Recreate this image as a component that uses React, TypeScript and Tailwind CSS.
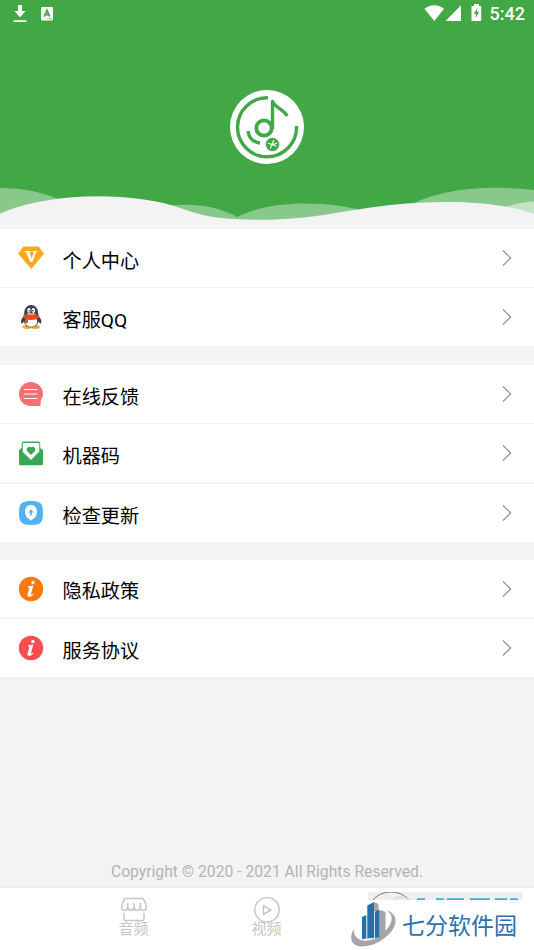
import type { ReactNode } from "react";

function StatusBar() {
  return (
    <div className="flex h-7 items-center justify-between pl-3 pr-[9px] text-white">
      <div className="flex items-center">
        <svg width="16" height="20" viewBox="0 0 16 20" fill="currentColor">
          <path d="M6 1h4v6h3.700L8 13.200 2.300 7H6zM1.500 16.200h13v1.900h-13z" />
        </svg>
        <svg className="ml-[13px]" width="12" height="14" viewBox="0 0 12 14">
          <rect width="12" height="13.500" rx="1" fill="#fff" />
          <path d="M3.300 9.700 6 3.200l2.700 6.500M4.300 7.700h3.400" fill="none" stroke="#42a846" strokeWidth="1.700" />
          <path d="M6.500 11.700h1M8.500 11.700h2" stroke="#42a846" />
        </svg>
      </div>
      <div className="flex items-center">
        <svg className="-mt-0.5" width="38" height="18" viewBox="0 0 38 18" fill="currentColor">
          <path d="M.5 4.800C6-.1 14.500-.1 20 4.800L10.300 17zM37 1.200V17H21.500z" />
        </svg>
        <svg className="-mt-[3px] ml-[9px]" width="11" height="17" viewBox="0 0 11 17">
          <path d="M3 0h5v2h2.200v15H.5V2H3z" fill="#fff" />
          <path d="M6.300 4 2.800 9.700h2.300L4.500 14l3.700-6H5.800z" fill="#42a846" />
        </svg>
        <span className="ml-2 text-[18px] leading-7 font-medium">5:42</span>
      </div>
    </div>
  );
}

function AppLogo() {
  return (
    <svg width="74" height="74" viewBox="0 0 74 74" fill="none" stroke="#42a846">
      <circle cx="37" cy="37" r="37" fill="#fff" stroke="none" />
      <path d="M38 7.800A29.500 29.500 0 1 0 66.500 36" strokeWidth="3.400" />
      <path d="M18 41c1 7 5 11.200 12 12" strokeWidth="3.400" />
      <circle cx="34" cy="38" r="7.700" strokeWidth="3.800" />
      <path d="M42.500 39V11.500C45.500 18 53 19 57.300 26" strokeWidth="3.400" strokeLinejoin="round" />
      <circle cx="42.500" cy="54.500" r="7" fill="#42a846" stroke="#fff" strokeWidth=".6" />
      <path d="M38 53.200 46.500 56M43.800 50.300 40.200 58.500M43 54.500l4-1.500" stroke="#fff" strokeWidth="1.200" />
    </svg>
  );
}

function Waves() {
  return (
    <svg className="block" width="534" height="49" viewBox="0 180 534 49">
      <path
        d="M0 188C24 188 42 192 60 200V229H0zM160 207C190 202 217 206 237 217C272 199 331 201 368 212V229H160zM405 208C435 190 481 184 534 190V229H405z"
        fill="#89c88b"
      />
      <path d="M503 208Q519 202 534 201.500V220z" fill="#c4e3c5" />
      <path
        d="M0 213.500C50 192 128 192 174 206C190 211 205 218 235 219C304 223 342 210 390 205C438 200 496 200 534 214V229H0z"
        fill="#f3f3f3"
      />
    </svg>
  );
}

function DiamondIcon() {
  return (
    <svg className="-mt-0.5" width="26" height="26" viewBox="0 0 26 26">
      <path d="M5.500 2.500h15L26 9.500 13.300 25 .2 9.500z" fill="#fba81b" />
      <path d="M6.800 7h6v1.300h-1.300l2.300 6.200 2-6.200h-1.200V7h4.700v1.300h-1.100L14.300 18h-2L8 8.300H6.800z" fill="#fff" />
    </svg>
  );
}

function PenguinIcon() {
  return (
    <svg width="26" height="26" viewBox="0 0 26 26">
      <ellipse cx="9" cy="23" rx="4.500" ry="1.900" fill="#f4a52c" />
      <ellipse cx="17.300" cy="23" rx="4.500" ry="1.900" fill="#f4a52c" />
      <path d="M6.500 11.500C3.500 14 2.500 16.500 3.300 19.500c1 .3 2-1 2.700-2 1 4 3.500 5.800 7.200 5.800s6.200-1.800 7.200-5.800c.7 1 1.700 2.300 2.700 2 .8-3-.2-5.500-3.200-8z" fill="#35434e" />
      <path d="M6.300 12C5.500 5 8.500 1 13.200 1s7.600 4 6.800 11z" fill="#35434e" />
      <ellipse cx="13.200" cy="17.500" rx="6" ry="5.300" fill="#fff" />
      <path d="M5.500 10.500q7.700 3 15.400 0l.6 3.500q-5 2.500-11.500 1.700v3.300H7.200v-4.500L5 13.700z" fill="#e8472b" />
      <ellipse cx="11" cy="6.500" rx="1.700" ry="2.400" fill="#fff" />
      <ellipse cx="15.400" cy="6.500" rx="1.700" ry="2.400" fill="#fff" />
      <circle cx="11.500" cy="6.700" r=".8" fill="#222" />
      <circle cx="14.900" cy="6.700" r=".8" fill="#222" />
      <ellipse cx="13.200" cy="10.200" rx="4.800" ry="1.300" fill="#f4a52c" />
    </svg>
  );
}

function ChatIcon() {
  return (
    <svg width="26" height="26" viewBox="0 0 26 26">
      <path d="M12.800 1C19.500 1 25 6.300 25 13c0 2.300-.9 4.500-2.300 6.500.1 2 .1 3.700-.5 5.500h-9.400C6 25 1 19.600 1 13S6.200 1 12.800 1z" fill="#f27072" />
      <path d="M6 8.500h13.500M6 13h13.500M6 17.500h13.500" stroke="#fff" strokeWidth="1.200" />
    </svg>
  );
}

function EnvelopeIcon() {
  return (
    <svg width="26" height="26" viewBox="0 0 26 26">
      <path d="M3 8.500 3.700 8V3q0-1.500 1.500-1.500h15.500q1.500 0 1.500 1.500v5L25 10V24q0 1.200-1.200 1.200H2.300Q1 25.200 1 24V10z" fill="#3aa757" />
      <path d="M4.800 3h16.500v8.500L13 20 4.800 12z" fill="#fff" />
      <path d="M13 15 9.300 11.300C7.500 8.500 10.500 5.300 13 7.400c2.500-2.100 5.500 1.100 3.700 3.900z" fill="#3aa757" />
    </svg>
  );
}

function UpdateIcon() {
  return (
    <svg width="26" height="26" viewBox="0 0 26 26">
      <path d="M13 1c9.500 0 12 2.500 12 12s-2.500 12-12 12S1 22.500 1 13 3.500 1 13 1z" fill="#51b3f0" />
      <path d="M13 5c-3.500 0-6 2.600-6 6.400 0 3.400 1.600 6.200 3.500 7.200L13 20.800l2.500-2.200c1.900-1 3.500-3.800 3.500-7.200C19 7.600 16.500 5 13 5z" fill="#fff" />
      <path d="M13 9.200 10.300 12.500h1.900v3h1.600v-3h1.900z" fill="#51b3f0" />
    </svg>
  );
}

function InfoIcon({ color }: { color: string }) {
  return (
    <svg width="26" height="26" viewBox="0 0 26 26">
      <circle cx="13" cy="13" r="12.200" fill={color} />
      <circle cx="14.900" cy="6.500" r="1.700" fill="#fff" />
      <path d="M10 10.300q2.800-.2 5.300-1l-2.300 9q0 1.300 2-.8l.6.500q-2 3-4.200 2.900-2.400-.2-1.800-2.300l1.800-6.700-1.600-.8z" fill="#fff" />
    </svg>
  );
}

function Row({ icon, label, className = "h-[58px]" }: { icon: ReactNode; label: string; className?: string }) {
  return (
    <div className={`flex items-center bg-white pl-[18px] pr-[22px] ${className}`}>
      {icon}
      <span className="ml-[18.500px] flex-1 pt-[7px] text-[19.200px] leading-7 text-black">{label}</span>
      <svg width="10" height="18" viewBox="0 0 10 18" fill="none" stroke="#8c8c8c" strokeWidth="1.100">
        <path d="M1 1.500 8.700 9 1 16.500" />
      </svg>
    </div>
  );
}

function SiteBadge() {
  return (
    <div className="absolute top-1 right-0 h-[60px] w-[186px]">
      <div className="ml-5 h-2 w-[155px] overflow-hidden bg-[#eeeff0]">
        <svg width="155" height="8" viewBox="0 0 155 8" fill="none">
          <path d="M4 9C13-3 33-3 42 9" stroke="#777" />
          <path d="M25 8q8-6 16 0" stroke="#ddd" strokeWidth="2" />
          <path d="M49 7.300h8M68 7.300h8M79 7.300h17M102 7.300h20M127 7.300h12M142 7.300h8" stroke="#3aafe0" strokeWidth="2" />
        </svg>
      </div>
      <div className="flex h-[52px] items-center bg-white">
        <svg className="-mt-2 shrink-0 overflow-visible" width="50" height="50" viewBox="0 0 50 50">
          <path d="M38 13C50 16 51 29 39 39C28 49 11 53 5 46C2 42 3 37 6 32C5 46 22 47 34 37C45 28 47 18 38 13z" fill="#a5a5a9" />
          <path d="M26 5l4.500 2v7h-4.500zM31.500 14l2-.8 4 2v21l-6 5z" fill="#a5a5a9" />
          <path d="M14 20l4.300-2v23.500l-4.300.7zM19.300 8.500 26 5v36l-6.700.5zM26.800 14.500l4.700-2V40l-4.700 1z" fill="#246fae" />
        </svg>
        <span className="ml-1 pt-px text-[23px] leading-8 whitespace-nowrap text-[#2b72ad]">七分软件园</span>
      </div>
    </div>
  );
}

export default function App() {
  return (
    <div className="flex h-[950px] w-[534px] flex-col overflow-hidden bg-[#f3f3f3] font-[Roboto,'Noto_Sans_CJK_SC',sans-serif]">
      <header className="flex h-[229px] flex-col bg-[#42a846]">
        <StatusBar />
        <div className="flex flex-1 justify-center pt-[62px]">
          <AppLogo />
        </div>
        <Waves />
      </header>

      <main className="flex flex-1 flex-col">
        <section>
          <Row icon={<DiamondIcon />} label="个人中心" />
          <Row icon={<PenguinIcon />} label="客服QQ" className="mt-px h-[58px]" />
        </section>
        <section className="mt-[19px]">
          <Row icon={<ChatIcon />} label="在线反馈" />
          <Row icon={<EnvelopeIcon />} label="机器码" className="mt-px h-[58px]" />
          <Row icon={<UpdateIcon />} label="检查更新" className="mt-0.5 h-[58px]" />
        </section>
        <section className="mt-[18px]">
          <Row icon={<InfoIcon color="#fb780f" />} label="隐私政策" className="h-[57px]" />
          <Row icon={<InfoIcon color="#f94d50" />} label="服务协议" className="mt-0.5 h-[58px]" />
        </section>
        <p className="mt-auto mb-0.5 text-center text-[15.700px] leading-6 text-[#b3b3b3]">
          Copyright © 2020 - 2021 All Rights Reserved.
        </p>
      </main>

      <nav className="relative flex h-16 border-t-2 border-[#ececec] bg-white text-[15px] text-[#c6c6c6]">
        <div className="flex w-[267px] flex-col items-center pt-[9px]">
          <svg width="28" height="26" viewBox="0 0 28 26" fill="none" stroke="currentColor" strokeWidth="1.500">
            <path d="M5 1.500h18q3 4 3.500 9c-.5 4-5 4-6.300 0-1 4-5.300 4-6.200 0-.9 4-5.200 4-6.200 0-1.300 4-5.800 4-6.300 0Q2 5.500 5 1.500zM7.800 11V6M14 11V6M20.200 11V6M4 16v6q0 1.500 1.500 1.500h17q1.500 0 1.500-1.500V16" />
          </svg>
          <span className="-mt-1 leading-5">音频</span>
        </div>
        <div className="-ml-[134px] flex w-[267px] flex-col items-center pt-[9px]">
          <svg width="28" height="26" viewBox="0 0 28 26" fill="none" stroke="currentColor" strokeWidth="1.500">
            <circle cx="14" cy="12.800" r="12.200" />
            <path d="M10.500 8.500v9L18 13z" />
          </svg>
          <span className="-mt-1 leading-5">视频</span>
        </div>
        <SiteBadge />
      </nav>
    </div>
  );
}
